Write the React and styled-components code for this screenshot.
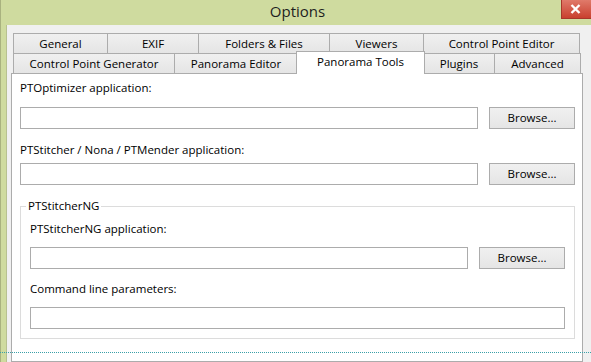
import React from "react";
import styled, { createGlobalStyle } from "styled-components";

const Global = createGlobalStyle`
  html, body { margin: 0; padding: 0; background: #f0f0f0; }
  body { font-family: "Open Sans", "Noto Sans", sans-serif; font-size: 11.5px; color: #000; }
`;

const Window = styled.div`
  width: 591px;
  height: 362px;
  overflow: hidden;
  position: relative;
  display: flex;
  flex-direction: column;
  background: #cfdb9f;
`;

const TitleBar = styled.div`
  height: 25px;
  flex: none;
  display: grid;
  grid-template-columns: 1fr auto 1fr;
  align-items: start;
  box-shadow: inset 1px 0 #a9b27f;
`;

const Title = styled.div`
  grid-column: 2;
  font-size: 15px;
  line-height: 22px;
  color: #1e1e1e;
  padding-left: 4px;
`;

const Close = styled.div`
  grid-column: 3;
  justify-self: end;
  width: 30px;
  height: 19px;
  background: linear-gradient(#e07a6a, #c9402f);
  border: 1px solid #a8372b;
  border-right: none;
  border-top: none;
  box-sizing: border-box;
  display: flex;
  align-items: center;
  padding-left: 8px;
`;

const Body = styled.div`
  flex: 1;
  display: flex;
  min-height: 0;
`;

const Frame = styled.div`
  width: 7px;
  flex: none;
  background: linear-gradient(to right, #a9b27f 0 1px, #cfdb9f 1px 6px, #b7c190 6px 7px);
`;

const Client = styled.div`
  flex: 1;
  background: #f0f0f0;
  padding: 8px 0 0 4px;
  display: flex;
  flex-direction: column;
`;

const Tabs = styled.div`
  padding-left: 2px;
  display: flex;
  flex-direction: column;
`;

const TabRow = styled.div`
  display: flex;
  height: 20px;
  position: relative;
  z-index: ${(p) => (p.$front ? 2 : 1)};
`;

const Tab = styled.div`
  width: ${(p) => p.$w}px;
  box-sizing: border-box;
  border: 1px solid #acacac;
  border-bottom: none;
  margin-left: -1px;
  &:first-child { margin-left: 0; }
  background: linear-gradient(#f0f0f0, #e5e5e5);
  display: flex;
  align-items: center;
  justify-content: center;
  line-height: 18px;
  white-space: nowrap;

  &.active {
    background: #fff;
    margin: -2px -2px -1px -2px;
    width: ${(p) => p.$w + 3}px;
    height: 23px;
    padding-bottom: 3px;
    position: relative;
    z-index: 3;
  }
  &.active + & { margin-left: 0; }
`;

const Panel = styled.div`
  width: 572px;
  height: 320px;
  box-sizing: border-box;
  border: 1px solid #acacac;
  background: #fff;
  padding: 6px 7px 0 8px;
  display: flex;
  flex-direction: column;
`;

const Label = styled.div`
  line-height: 16px;
  height: 16px;
  margin-top: ${(p) => p.$top || 0}px;
  margin-bottom: ${(p) => p.$gap}px;
  white-space: nowrap;
`;

const Row = styled.div`
  display: flex;
  gap: 11px;
`;

const Field = styled.div`
  flex: 1;
  height: 22px;
  box-sizing: border-box;
  border: 1px solid #acacac;
  background: #fff;
`;

const Button = styled.div`
  width: 86px;
  height: 22px;
  box-sizing: border-box;
  border: 1px solid #acacac;
  background: linear-gradient(#f0f0f0, #e5e5e5);
  display: flex;
  align-items: center;
  justify-content: center;
  line-height: 16px;
`;

const Group = styled.fieldset`
  margin: 13px 0 0 0;
  padding: 7px 9px 9px 9px;
  border: 1px solid #dcdcdc;
  display: flex;
  flex-direction: column;
  min-width: 0;
`;

const Legend = styled.legend`
  padding: 0 2px;
  margin-left: -4px;
  line-height: 16px;
`;

const Dotted = styled.div`
  position: absolute;
  left: 0;
  right: 0;
  top: 352px;
  border-top: 1px dotted #3aa0a8;
`;

const row1 = [
  ["General", 95],
  ["EXIF", 92],
  ["Folders & Files", 132],
  ["Viewers", 95],
  ["Control Point Editor", 157],
];

const row2 = [
  ["Control Point Generator", 162],
  ["Panorama Editor", 124],
  ["Panorama Tools", 126],
  ["Plugins", 72],
  ["Advanced", 87],
];

const Path = ({ label, top, gap, browse = true }) => (
  <>
    <Label $top={top} $gap={gap}>{label}</Label>
    <Row>
      <Field />
      {browse && <Button>Browse...</Button>}
    </Row>
  </>
);

export default function App() {
  return (
    <Window>
      <Global />
      <TitleBar>
        <Title>Options</Title>
        <Close>
          <svg width="11" height="10" viewBox="0 0 11 10">
            <path d="M1.5 1 L9.5 9 M9.5 1 L1.5 9" stroke="#fff" strokeWidth="2.4" />
          </svg>
        </Close>
      </TitleBar>
      <Body>
        <Frame />
        <Client>
          <Tabs>
            <TabRow>
              {row1.map(([t, w]) => (
                <Tab key={t} $w={w}>{t}</Tab>
              ))}
            </TabRow>
            <TabRow $front>
              {row2.map(([t, w]) => (
                <Tab key={t} $w={w} className={t === "Panorama Tools" ? "active" : ""}>
                  {t}
                </Tab>
              ))}
            </TabRow>
          </Tabs>
          <Panel>
            <Path label="PTOptimizer application:" gap={11} />
            <Path label="PTStitcher / Nona / PTMender application:" top={13} gap={5} />
            <Group>
              <Legend>PTStitcherNG</Legend>
              <Path label="PTStitcherNG application:" top={0} gap={10} />
              <Path label="Command line parameters:" top={12} gap={10} browse={false} />
            </Group>
          </Panel>
        </Client>
      </Body>
      <Dotted />
    </Window>
  );
}
